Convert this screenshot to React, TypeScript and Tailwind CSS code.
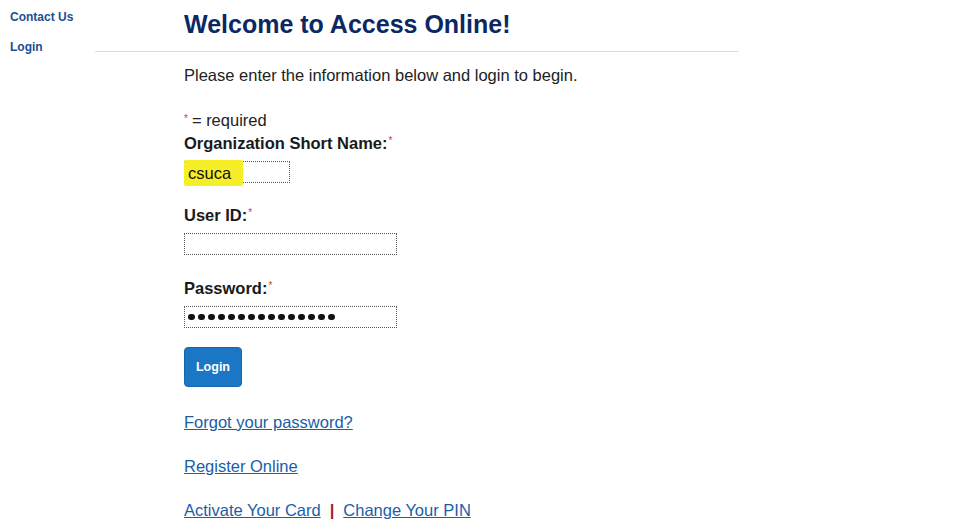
import React from "react";

const navLinks = ["Contact Us", "Login"];

function Req() {
  return <span className="relative -top-[5px] ml-[1px] text-[10px] font-normal leading-none text-[#d8333a]">*</span>;
}

function Field({ label, width, children }: { label: string; width: string; children?: React.ReactNode }) {
  return (
    <>
      <p className="text-[16.5px] font-bold leading-[20px] text-[#1a1a1a]">
        {label}
        <Req />
      </p>
      <div className={`relative mt-[8px] h-[22px] ${width} border border-dotted border-[#555] bg-white`}>{children}</div>
    </>
  );
}

export default function App() {
  return (
    <div
      className="flex min-h-screen bg-white text-[#222]"
      style={{ fontFamily: '"Liberation Sans", Arial, sans-serif' }}
    >
      <nav className="w-[95px] shrink-0 pl-[10px] pt-[9px]">
        {navLinks.map((l, i) => (
          <a key={l} href="#" className={`block text-[12px] font-bold leading-[16px] text-[#1b4f91] ${i > 0 ? "mt-[14px]" : ""}`}>
            {l}
          </a>
        ))}
      </nav>

      <main className="flex-1">
        <div className="w-[643px] border-b border-[#bfe4f7] pb-[12px] pt-[9px]">
          <h1 className="ml-[89px] text-[25px] font-bold leading-[30px] text-[#0b2862]">Welcome to Access Online!</h1>
        </div>

        <div className="pl-[89px]">
          <p className="mt-[13px] text-[16.5px] leading-[20px]">Please enter the information below and login to begin.</p>

          <p className="mt-[25px] text-[16.5px] leading-[20px]">
            <span className="relative -top-[4px] mr-[4px] text-[10px] leading-none text-[#d8333a]">*</span>= required
          </p>

          <div className="mt-[3px]">
            <Field label="Organization Short Name:" width="w-[106px]">
              <span className="absolute -left-[1px] -top-[2px] h-[26px] w-[59px] rounded-[2px] bg-[#f6ee26]" />
              <span className="relative pl-[3px] text-[16.5px] leading-[20px] text-[#111]">csuca</span>
            </Field>
          </div>

          <div className="mt-[22px]">
            <Field label="User ID:" width="w-[213px]" />
          </div>

          <div className="mt-[23px]">
            <Field label="Password:" width="w-[213px]">
              <div className="flex h-full items-center gap-[3.5px] pl-[3px]">
                {Array.from({ length: 15 }).map((_, i) => (
                  <span key={i} className="h-[6.5px] w-[6.5px] rounded-full bg-[#111]" />
                ))}
              </div>
            </Field>
          </div>

          <button className="mt-[19px] h-[40px] w-[58px] rounded-[4px] border border-[#1566ad] bg-[#1b77c5] text-[12.5px] font-bold text-white">
            Login
          </button>

          <div className="text-[16.5px] leading-[20px] text-[#1a5ea8]">
            <a href="#" className="mt-[25px] block w-fit underline">Forgot your password?</a>
            <a href="#" className="mt-[24px] block w-fit underline">Register Online</a>
            <p className="mt-[24px]">
              <a href="#" className="underline">Activate Your Card</a>
              <span className="mx-[9px] font-bold text-[#9b2335]">|</span>
              <a href="#" className="underline">Change Your PIN</a>
            </p>
          </div>
        </div>
      </main>
    </div>
  );
}
